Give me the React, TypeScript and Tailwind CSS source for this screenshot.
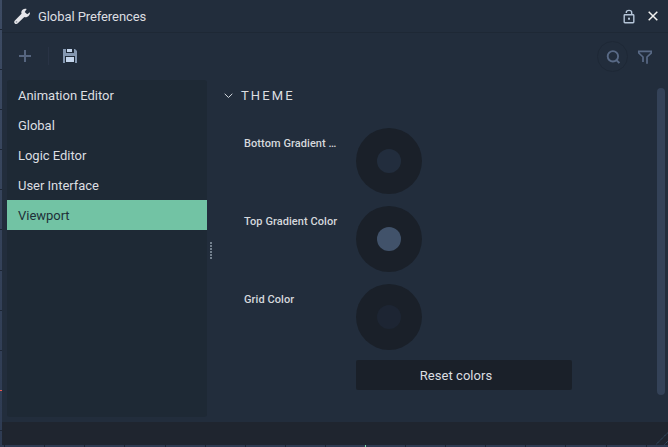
import { ReactNode } from "react";

const categories = ["Animation Editor", "Global", "Logic Editor", "User Interface", "Viewport"];

const swatches = [
  { label: "Bottom Gradient …", fill: "bg-[#222d3d]" },
  { label: "Top Gradient Color", fill: "bg-[#41526a]" },
  { label: "Grid Color", fill: "bg-[#1d2533]" },
];

const rowLines = [29, 69, 109, 149, 189, 229, 270, 310, 350, 430];
const columnLines = [4, 44, 84, 124, 165, 205, 245, 285, 325, 405, 445, 485, 525, 565, 606, 646];

function ViewportEdges() {
  return (
    <svg className="absolute inset-0" width="668" height="447" shapeRendering="crispEdges">
      {rowLines.map((y) => (
        <rect key={y} x="0" y={y} width="2" height="1" fill="#1d2635" />
      ))}
      {columnLines.map((x) => (
        <rect key={x} x={x} y="445" width="1" height="2" fill="#1d2635" />
      ))}
      <rect x="0" y="390" width="2" height="1" fill="#f0564f" />
      <rect x="365" y="445" width="1" height="2" fill="#7fdcae" />
    </svg>
  );
}

function Header() {
  return (
    <header className="flex h-[33px] shrink-0 items-center border-b border-[#1e2835] pl-3 pr-[10px]">
      <svg width="17" height="17" viewBox="0 0 17 17">
        <path
          d="M16 4.2 13.2 6.3 10.7 4 12.7 1.1C10.7.3 8.2 1.2 7.5 3.2c-.3.9-.3 1.7 0 2.5L.9 12.4c-.9.9-.9 2.2-.1 3s2.200.8 3-.1l6.500-6.300c2.900.9 5.900-1.600 5.700-4.800Z"
          fill="#e6e6ea"
        />
        <circle cx="2.500" cy="13.800" r=".9" fill="#9298a3" />
      </svg>
      <h1 className="ml-[7px] pt-px text-[13px] leading-4 tracking-[-.08px]">Global Preferences</h1>
      <svg className="ml-auto" width="12" height="15" viewBox="0 0 12 15" fill="none" stroke="#b5c5d8" strokeWidth="1.400">
        <rect x="1.200" y="5.700" width="9.600" height="8" rx=".7" />
        <path d="M3.300 4V3.500C3.300.600 8.700.600 8.700 3.500V5.700" />
        <rect x="5" y="8.700" width="2" height="2" fill="#b5c5d8" stroke="none" />
      </svg>
      <svg className="ml-[13px]" width="10" height="10" viewBox="0 0 10 10" fill="none" stroke="#f1f1ef" strokeWidth="1.500">
        <path d="M.700.700 9.300 9.300M9.300.700.700 9.300" />
      </svg>
    </header>
  );
}

function Toolbar() {
  return (
    <div className="flex h-[47px] shrink-0 items-center pb-px pl-[17px] pr-4">
      <svg width="12" height="12" viewBox="0 0 12 12" stroke="#56657f" strokeWidth="2">
        <path d="M6 0V12M0 6H12" />
      </svg>
      <div className="ml-[17px] h-[18px] w-px bg-[#293345]" />
      <svg className="ml-[14px]" width="14" height="14" viewBox="0 0 14 14">
        <path d="M0 0H12L14 2V14H0Z" fill="#8497b0" />
        <path d="M3 0H11V4H3ZM2 7H12V14H2Z" fill="#202b39" />
        <path d="M4 0H9V3H4ZM3 8H11V13H3Z" fill="#c5d6ed" />
      </svg>
      <div className="ml-auto flex h-[31px] w-[31px] items-center justify-center rounded-full border border-[#1e2836]">
        <svg width="15" height="15" viewBox="0 0 15 15" fill="none" stroke="#596a86" strokeWidth="1.900">
          <circle cx="7.900" cy="7.300" r="5.200" />
          <path d="m11.200 10.800 3.200 3.200" />
        </svg>
      </div>
      <svg className="ml-[9px]" width="15" height="15" viewBox="0 0 15 15" fill="none" stroke="#596a86" strokeWidth="1.700">
        <path d="M6 13V8L1.800 4V2.300H14.200V4L10 8V14.800" />
      </svg>
    </div>
  );
}

function Row({ label, children }: { label?: string; children: ReactNode }) {
  return (
    <div className="flex">
      <div className="w-28 whitespace-nowrap pt-[9px] text-[11px] font-medium leading-[14px] tracking-[.07px] text-[#d5d8dc]">{label}</div>
      {children}
    </div>
  );
}

export default function App() {
  return (
    <div className="relative h-[447px] w-[668px] overflow-hidden bg-linear-to-b from-[#3d4b63] to-[#2e3b52] pb-[2px] pl-[2px] font-['Roboto',sans-serif] text-[#dcdee1]">
      <ViewportEdges />
      <div className="relative flex h-[445px] flex-col bg-[#222d3c]">
        <Header />
        <Toolbar />
        <div className="flex h-[342px] shrink-0">
          <nav className="ml-[5px] h-[337px] w-[200px] rounded-[3px] bg-[#1e2935]">
            {categories.map((name) => (
              <div
                key={name}
                className={`flex h-[30px] items-center pl-[11px] pt-[2px] text-[13px] tracking-[-.03px] ${
                  name === "Viewport" ? "bg-[#72c3a4] text-[#203038]" : ""
                }`}
              >
                {name}
              </div>
            ))}
          </nav>
          <div className="ml-[3px] mt-[162px] flex w-[2px] flex-col gap-px">
            {[0, 1, 2, 3, 4, 5].map((dot) => (
              <i key={dot} className="h-[2px] w-[2px] shrink-0 bg-[#73808d]" />
            ))}
          </div>
          <main className="ml-[12px] flex-1">
            <div className="flex h-[30px] items-center">
              <svg className="mt-px" width="9" height="6" viewBox="0 0 9 6" fill="none" stroke="#d5dae0">
                <path d="m.700.800 3.800 3.700L8.300.800" />
              </svg>
              <h2 className="ml-2 pt-[2px] text-[13px] tracking-[2.100px]">THEME</h2>
            </div>
            <div className="ml-5 mt-[18px] flex flex-col gap-3">
              {swatches.map(({ label, fill }) => (
                <Row key={label} label={label}>
                  <button className="flex h-[66px] w-[66px] items-center justify-center rounded-full bg-[#1a2029]">
                    <span className={`h-6 w-6 rounded-full ${fill}`} />
                  </button>
                </Row>
              ))}
            </div>
            <div className="ml-5 mt-[10px]">
              <Row>
                <button className="h-[30px] w-[216px] rounded-[2px] bg-[#1a2029] pr-4 pt-[2px] text-[13px] tracking-[.05px]">
                  Reset colors
                </button>
              </Row>
            </div>
          </main>
          <div className="mr-[3px] mt-2 h-[307px] w-2 rounded-full bg-[#344258]" />
        </div>
        <footer className="flex h-[23px] items-end justify-end bg-[#1f252f]">
          <svg width="12" height="13" viewBox="0 0 12 13" stroke="#36516b" strokeDasharray="1.400 .6">
            <path d="M0 12.500 12 .500M8.500 12.500 12 9" />
          </svg>
        </footer>
      </div>
    </div>
  );
}
